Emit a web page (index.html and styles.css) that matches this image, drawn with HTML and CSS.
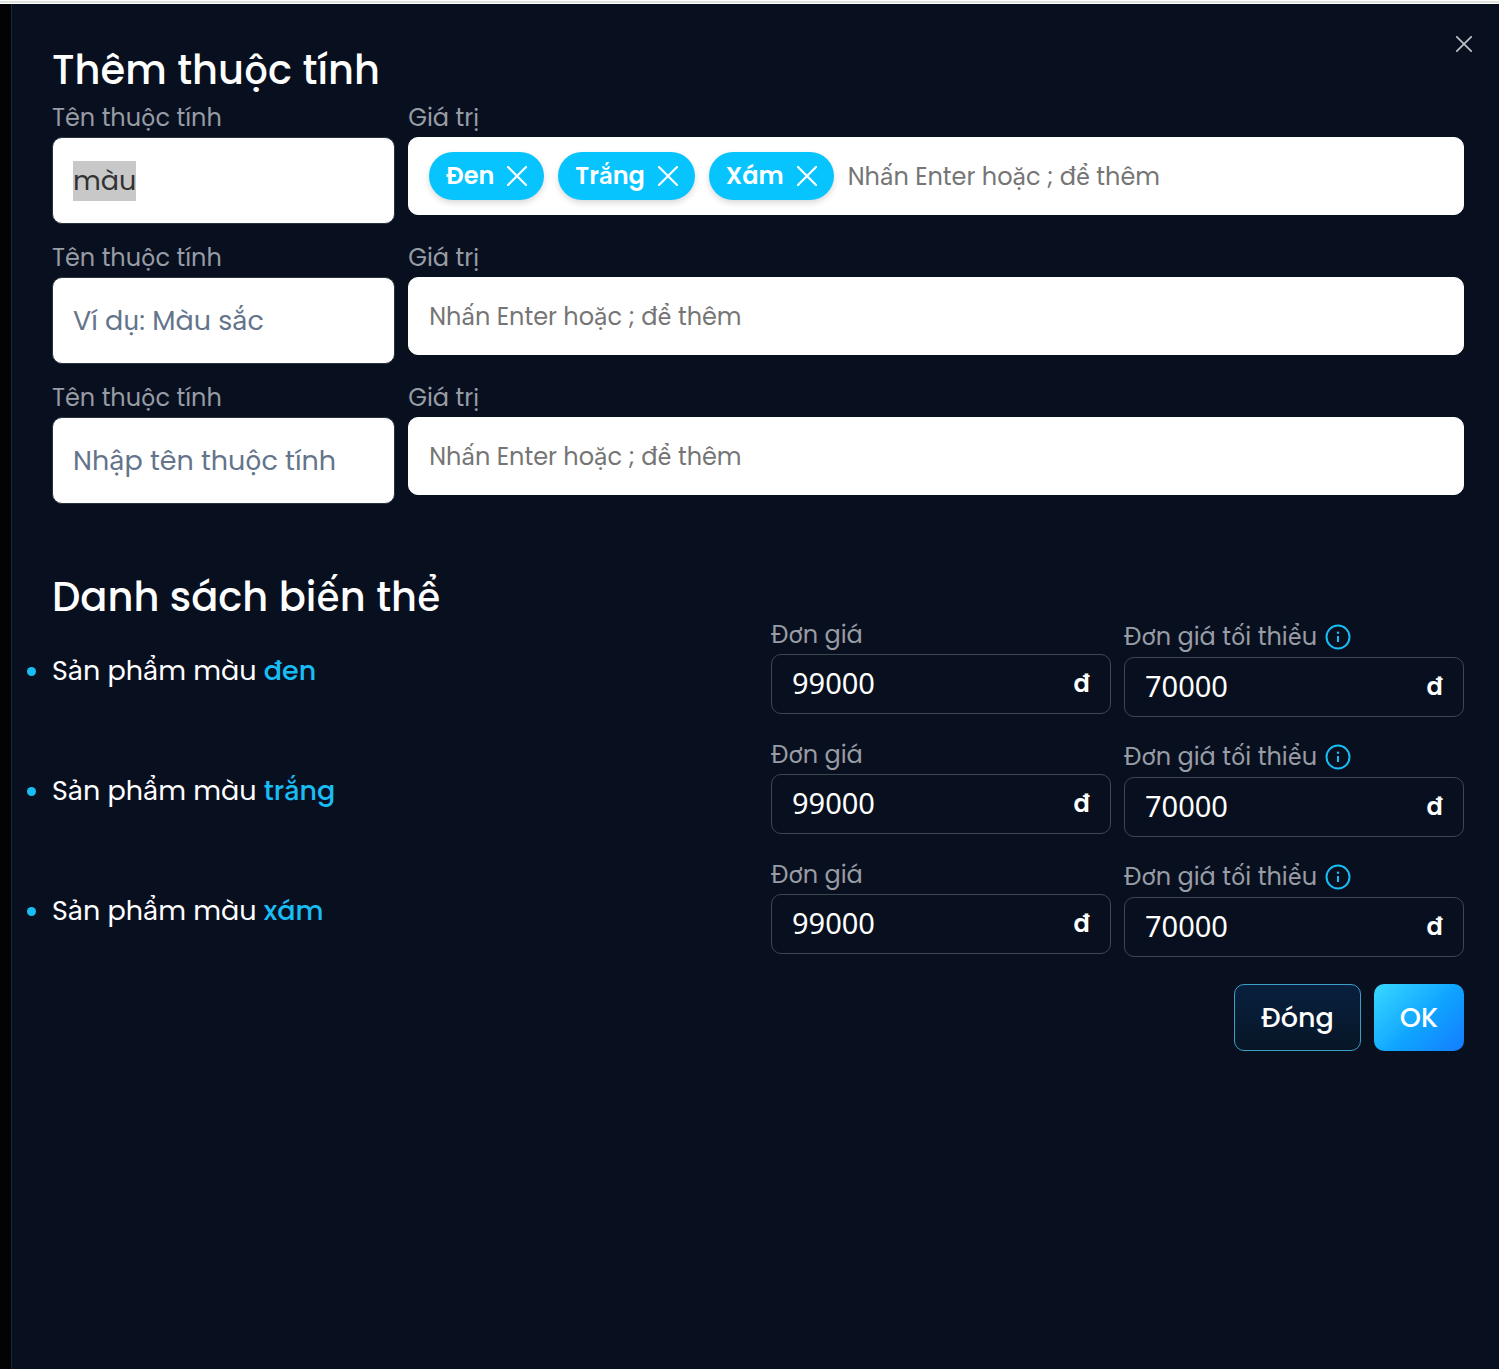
FILE: index.html
```html
<!DOCTYPE html>
<html lang="vi">
<head>
<meta charset="utf-8">
<meta name="viewport" content="width=device-width, initial-scale=1">
<title>Thêm thuộc tính</title>
<link rel="stylesheet" href="styles.css">
</head>
<body>
<svg class="sprite" aria-hidden="true">
  <symbol id="icon-x" viewBox="0 0 20 20"><path d="M1 1 19 19M19 1 1 19" fill="none" stroke="currentColor" stroke-width="2.2" stroke-linecap="round"/></symbol>
  <symbol id="icon-info" viewBox="0 0 26 26"><circle cx="13" cy="13" r="11.5" fill="none" stroke="currentColor" stroke-width="2"/><circle cx="13" cy="8.7" r="1.2" fill="currentColor"/><path d="M13 12v6" stroke="currentColor" stroke-width="2"/></symbol>
</svg>
<main class="drawer">
  <button class="close" type="button" aria-label="Đóng cửa sổ"><svg class="close-icon"><use href="#icon-x"/></svg></button>

  <h2 class="title">Thêm thuộc tính</h2>
  <div class="attributes">
    <div class="attribute">
      <div class="field">
        <label class="label" for="name1">Tên thuộc tính</label>
        <input class="name-input" id="name1" type="text" value="màu">
      </div>
      <div class="field field-wide">
        <label class="label" for="value1">Giá trị</label>
        <div class="tag-box">
          <span class="tag">Đen<button class="tag-remove" type="button" aria-label="Xóa Đen"><svg class="tag-icon"><use href="#icon-x"/></svg></button></span>
          <span class="tag">Trắng<button class="tag-remove" type="button" aria-label="Xóa Trắng"><svg class="tag-icon"><use href="#icon-x"/></svg></button></span>
          <span class="tag">Xám<button class="tag-remove" type="button" aria-label="Xóa Xám"><svg class="tag-icon"><use href="#icon-x"/></svg></button></span>
          <input class="tag-input" id="value1" type="text" placeholder="Nhấn Enter hoặc ; để thêm">
        </div>
      </div>
    </div>
    <div class="attribute">
      <div class="field">
        <label class="label" for="name2">Tên thuộc tính</label>
        <input class="name-input" id="name2" type="text" placeholder="Ví dụ: Màu sắc">
      </div>
      <div class="field field-wide">
        <label class="label" for="value2">Giá trị</label>
        <div class="tag-box"><input class="tag-input" id="value2" type="text" placeholder="Nhấn Enter hoặc ; để thêm"></div>
      </div>
    </div>
    <div class="attribute">
      <div class="field">
        <label class="label" for="name3">Tên thuộc tính</label>
        <input class="name-input" id="name3" type="text" placeholder="Nhập tên thuộc tính">
      </div>
      <div class="field field-wide">
        <label class="label" for="value3">Giá trị</label>
        <div class="tag-box"><input class="tag-input" id="value3" type="text" placeholder="Nhấn Enter hoặc ; để thêm"></div>
      </div>
    </div>
  </div>

  <h2 class="title">Danh sách biến thể</h2>
  <ul class="variants">
    <li class="variant">
      <p class="variant-name">Sản phẩm màu <strong class="accent">đen</strong></p>
      <div class="prices">
        <div class="field">
          <label class="label" for="price1">Đơn giá</label>
          <div class="price-box"><input class="price-input" id="price1" type="text" value="99000"><span class="unit">đ</span></div>
        </div>
        <div class="field">
          <label class="label label-info" for="min1">Đơn giá tối thiểu <svg class="info-icon"><use href="#icon-info"/></svg></label>
          <div class="price-box"><input class="price-input" id="min1" type="text" value="70000"><span class="unit">đ</span></div>
        </div>
      </div>
    </li>
    <li class="variant">
      <p class="variant-name">Sản phẩm màu <strong class="accent">trắng</strong></p>
      <div class="prices">
        <div class="field">
          <label class="label" for="price2">Đơn giá</label>
          <div class="price-box"><input class="price-input" id="price2" type="text" value="99000"><span class="unit">đ</span></div>
        </div>
        <div class="field">
          <label class="label label-info" for="min2">Đơn giá tối thiểu <svg class="info-icon"><use href="#icon-info"/></svg></label>
          <div class="price-box"><input class="price-input" id="min2" type="text" value="70000"><span class="unit">đ</span></div>
        </div>
      </div>
    </li>
    <li class="variant">
      <p class="variant-name">Sản phẩm màu <strong class="accent">xám</strong></p>
      <div class="prices">
        <div class="field">
          <label class="label" for="price3">Đơn giá</label>
          <div class="price-box"><input class="price-input" id="price3" type="text" value="99000"><span class="unit">đ</span></div>
        </div>
        <div class="field">
          <label class="label label-info" for="min3">Đơn giá tối thiểu <svg class="info-icon"><use href="#icon-info"/></svg></label>
          <div class="price-box"><input class="price-input" id="min3" type="text" value="70000"><span class="unit">đ</span></div>
        </div>
      </div>
    </li>
  </ul>

  <div class="actions">
    <button class="button button-outline" type="button">Đóng</button>
    <button class="button button-primary" type="button">OK</button>
  </div>
</main>
<script src="main.js"></script>
</body>
</html>
```
FILE: styles.css
```css
* { box-sizing: border-box; }

body {
  margin: 0;
  min-height: 100vh;
  display: flex;
  padding: 4px 0 0 11px;
  font-family: Poppins, Inter, "Noto Sans", sans-serif;
  color: #ffffff;
  background:
    linear-gradient(#dfe3de, #dfe3de) 0 1px / 100% 2px no-repeat,
    linear-gradient(#ffffff, #ffffff) 0 0 / 100% 4px no-repeat,
    #030305;
}

button, input { font-family: inherit; }
.sprite { display: none; }

.drawer {
  position: relative;
  flex: 1;
  min-width: 0;
  padding: 46px 35px 40px 40px;
  border-left: 1px solid #1b2835;
  background: #081020;
}

.close {
  position: absolute;
  top: 28px;
  right: 23px;
  display: grid;
  place-items: center;
  width: 24px;
  height: 24px;
  padding: 0;
  border: 0;
  background: none;
  color: #b9c0c6;
}
.close-icon { width: 16px; height: 16px; }

.title {
  margin: 0;
  font-size: 40px;
  line-height: 40px;
  font-weight: 500;
}

.attributes {
  display: grid;
  gap: 16px;
  margin: 10px 0 73px;
}
.attribute {
  display: grid;
  grid-template-columns: repeat(4, 1fr);
  align-items: start;
  column-gap: 13px;
}
.field {
  display: grid;
  grid-template-columns: minmax(0, 1fr);
  row-gap: 1px;
  min-width: 0;
}
.field-wide { grid-column: span 3; }

.label {
  font-size: 24px;
  line-height: 36px;
  color: #989ca4;
}
.label-info {
  display: flex;
  align-items: center;
  gap: 8px;
  line-height: 39px;
}
.info-icon { width: 26px; height: 26px; color: #18bdf5; }

.name-input {
  width: 100%;
  height: 87px;
  padding: 0 20px;
  border: 1px solid #2a3240;
  border-radius: 10px;
  outline: 0;
  background: #ffffff;
  color: #333333;
  font-size: 27px;
}
.name-input::placeholder { color: #64748b; }
.name-input::selection { background: #c8c8c8; color: #333333; }

.tag-box {
  display: flex;
  align-items: center;
  gap: 14px;
  min-height: 78px;
  padding: 14px 20px;
  border: 1px solid #ffffff;
  border-radius: 10px;
  background: #ffffff;
}
.tag {
  display: flex;
  align-items: center;
  gap: 13px;
  height: 48px;
  padding: 0 17px;
  border-radius: 24px;
  background: #08c4fe;
  box-shadow: 0 3px 6px rgba(0, 0, 0, .15);
  font-size: 24px;
  line-height: 36px;
  font-weight: 600;
}
.tag-remove {
  display: flex;
  padding: 0;
  border: 0;
  background: none;
  color: inherit;
}
.tag-icon { width: 20px; height: 20px; }
.tag-input {
  flex: 1;
  min-width: 0;
  padding: 0;
  border: 0;
  outline: 0;
  background: none;
  color: #333333;
  font-size: 24px;
}
.tag-input::placeholder { color: #757575; }

.variants {
  display: grid;
  gap: 20px;
  margin: 0;
  padding: 0;
  list-style: none;
}
.variant {
  display: grid;
  grid-template-columns: 1fr 1fr;
  align-items: center;
}
.variant-name {
  display: flex;
  align-items: center;
  margin: 8px 0 0 -25px;
  font-size: 27px;
  line-height: 40px;
  white-space: pre;
}
.variant-name::before {
  content: "";
  width: 9px;
  height: 9px;
  margin-right: 16px;
  border-radius: 50%;
  background: #18bdf5;
}
.accent { font-weight: 500; color: #18bdf5; }

.prices {
  display: grid;
  grid-template-columns: 1fr 1fr;
  align-items: start;
  gap: 13px;
  padding-left: 13px;
}
.price-box {
  display: flex;
  align-items: center;
  height: 60px;
  padding: 0 20px 2px;
  border: 1px solid #3f4651;
  border-radius: 10px;
}
.price-input {
  flex: 1;
  min-width: 0;
  padding: 0 0 2px;
  border: 0;
  outline: 0;
  background: none;
  color: #ffffff;
  font-family: "Noto Sans", sans-serif;
  font-size: 29px;
}
.unit { font-size: 24px; font-weight: 600; }

.actions {
  display: flex;
  justify-content: flex-end;
  gap: 13px;
  margin-top: 27px;
}
.button {
  height: 67px;
  padding: 0 26px;
  border: 1px solid transparent;
  border-radius: 10px;
  color: #ffffff;
  font-size: 27px;
  font-weight: 500;
}
.button-outline {
  border-color: #3a9fc4;
  background: linear-gradient(#08203e, #071627);
}
.button-primary {
  border: 0;
  background: linear-gradient(135deg, #38d9ff, #0fa3ff 55%, #147dff);
}
```
FILE: main.js
```js
// Start with the first attribute name focused and selected.
const firstName = document.getElementById("name1");
firstName.focus();
firstName.select();
```
